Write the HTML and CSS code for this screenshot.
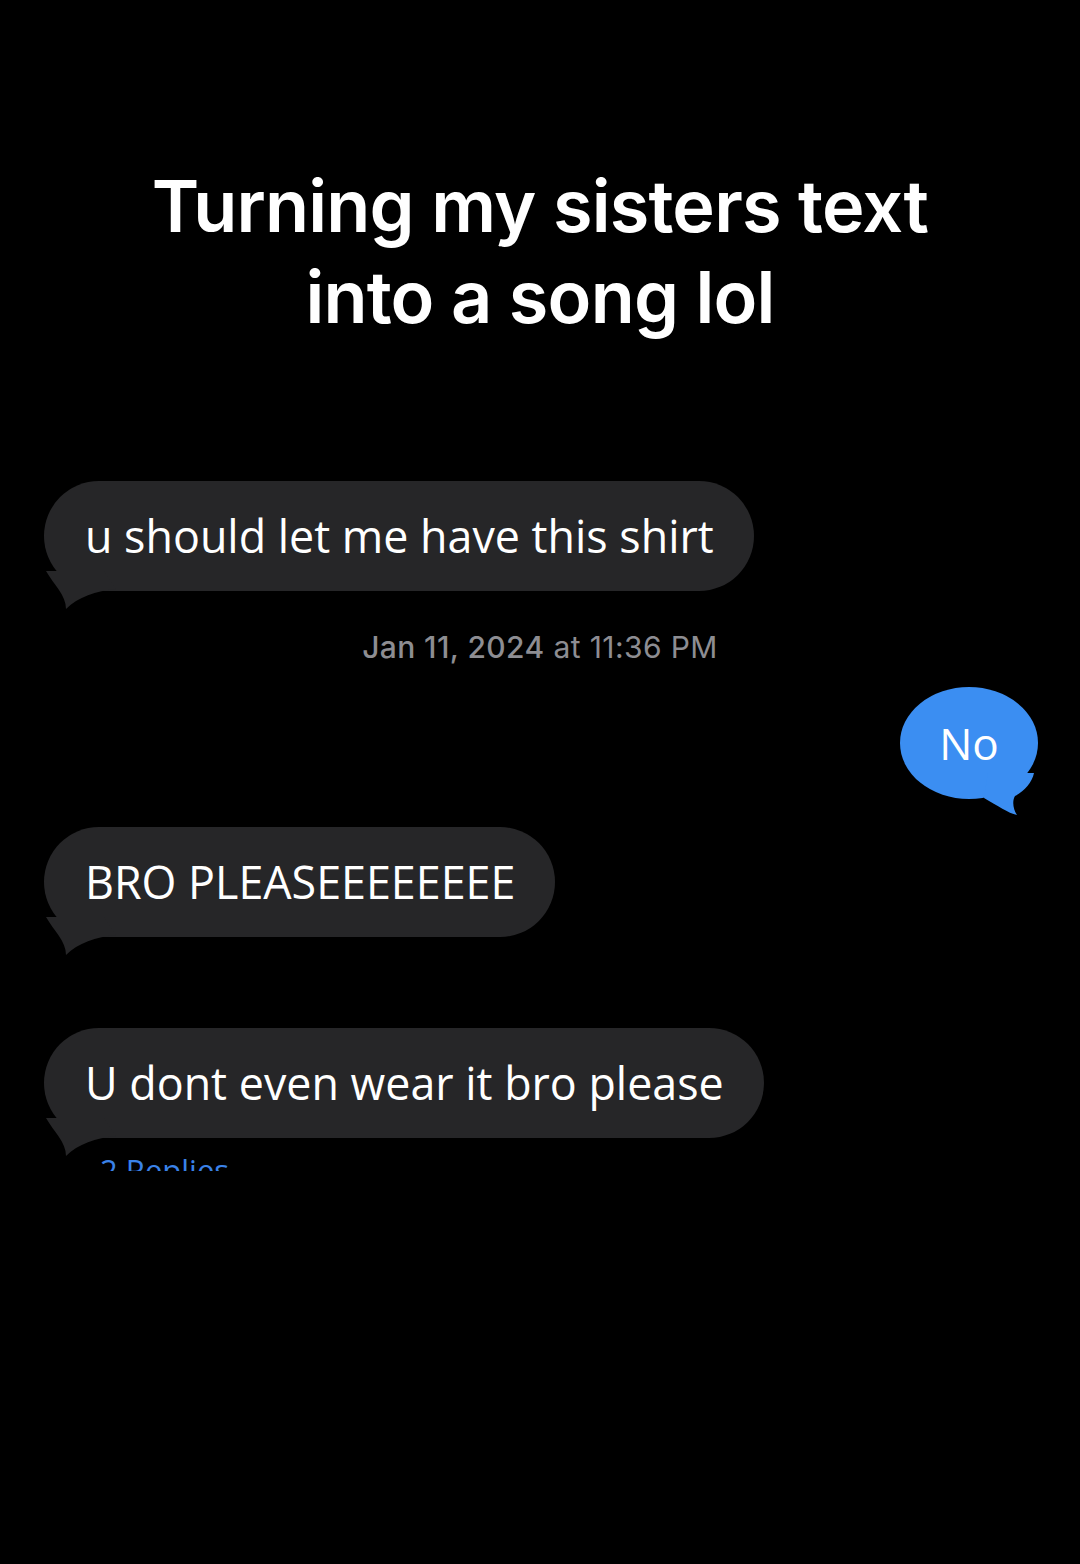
FILE: index.html
```html
<!DOCTYPE html>
<html>
<head>
<meta charset="utf-8">
<link rel="stylesheet" href="styles.css">
</head>
<body>
<div class="screen">
  <h1 class="title">Turning my sisters text<br>into a song lol</h1>
  <div class="thread">
    <div class="row in first">
      <div class="bubble gray">u should let me have this shirt
        <svg class="tail tail-l" width="80" height="40" viewBox="0 0 80 40"><path d="M2 0 C 10 14 22 24 22 38 C 34 26 52 20 72 18 L 60 0 Z" fill="#262628"/></svg>
      </div>
    </div>
    <div class="stamp"><b>Jan 11, 2024</b> at 11:36 PM</div>
    <div class="row out">
      <div class="bubble blue">No
        <svg class="tail tail-r" width="60" height="50" viewBox="0 0 60 50"><path d="M30 0 L 56 0 C 54 10 46 18 37 23 C 34 28 35 36 39 42 C 30 40 20 33 6 25 L 10 0 Z" fill="#3b8ef2"/></svg>
      </div>
    </div>
    <div class="row in second">
      <div class="bubble gray">BRO PLEASEEEEEEEE
        <svg class="tail tail-l" width="80" height="40" viewBox="0 0 80 40"><path d="M2 0 C 10 14 22 24 22 38 C 34 26 52 20 72 18 L 60 0 Z" fill="#262628"/></svg>
      </div>
    </div>
    <div class="row in third">
      <div class="bubble gray">U dont even wear it bro please
        <svg class="tail tail-l" width="80" height="40" viewBox="0 0 80 40"><path d="M2 0 C 10 14 22 24 22 38 C 34 26 52 20 72 18 L 60 0 Z" fill="#262628"/></svg>
      </div>
    </div>
    <div class="replies">2 Replies</div>
  </div>
</div>
</body>
</html>
```

FILE: styles.css
```css
html, body {
  margin: 0;
  padding: 0;
  background: #000;
}
.screen {
  width: 1080px;
  height: 1564px;
  background: #000;
  overflow: hidden;
}
.title {
  margin: 0;
  padding-top: 160px;
  text-align: center;
  color: #fff;
  font-family: Inter, "Noto Sans", sans-serif;
  font-weight: 600;
  font-size: 72px;
  line-height: 91px;
  letter-spacing: -0.8px;
}
.thread {
  margin-top: 139px;
  height: 690px;
  overflow: hidden;
  font-family: "Open Sans", "Noto Sans", sans-serif;
}
.row {
  display: flex;
}
.row.in {
  justify-content: flex-start;
  padding-left: 44px;
}
.row.out {
  justify-content: flex-end;
  padding-right: 42px;
  margin-top: 23px;
}
.row.second { margin-top: 28px; }
.row.third { margin-top: 91px; }
.bubble {
  position: relative;
  height: 110px;
  line-height: 110px;
  font-size: 44.8px;
  color: #fff;
  padding: 0 40px 0 41px;
  border-radius: 55px;
  white-space: nowrap;
}
.bubble.gray {
  background: #262628;
}
.bubble.blue {
  background: #3b8ef2;
  height: 112px;
  line-height: 112px;
  width: 138px;
  padding: 0;
  text-align: center;
  border-radius: 69px / 56px;
  font-size: 44px;
}
.tail {
  position: absolute;
  pointer-events: none;
}
.tail-l {
  left: 0;
  top: 90px;
}
.tail-r {
  right: 0;
  top: 86px;
}
.stamp {
  margin-top: 39px;
  text-align: center;
  color: #8d8d92;
  font-family: Inter, sans-serif;
  font-size: 30px;
  line-height: 34px;
  letter-spacing: 0.4px;
}
.stamp b {
  font-weight: 500;
}
.replies {
  margin-top: 12px;
  padding-left: 100px;
  color: #3a82e8;
  font-size: 31px;
  line-height: 40px;
}
```
